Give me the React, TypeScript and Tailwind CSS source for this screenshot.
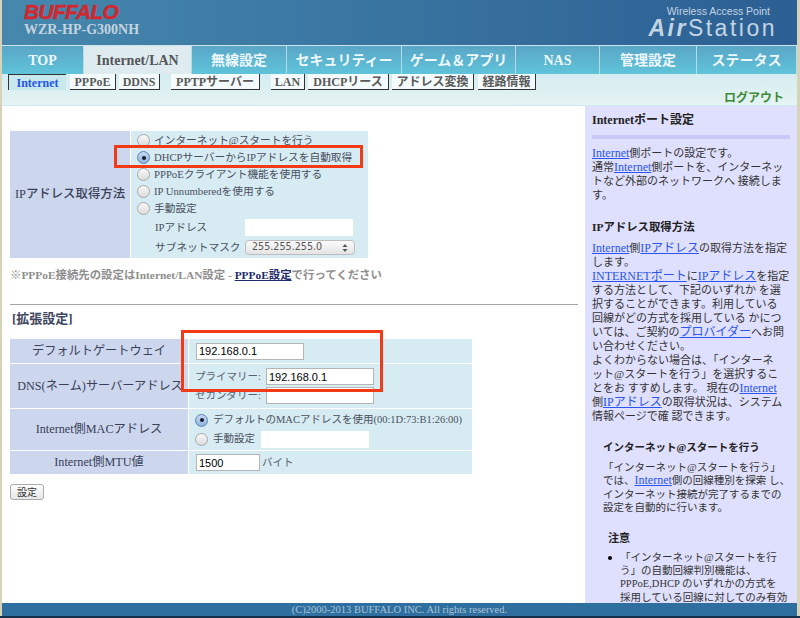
import React from "react";

const serif = "font-['Liberation_Serif','Noto_Sans_CJK_JP',serif]";

type Part = string | { a: string };
const L = ({ t }: { t: string }) => <a className="text-[12px] text-[#2a55ee] underline">{t}</a>;
const Line = ({ parts }: { parts: Part[] }) => (
  <div className="whitespace-nowrap">
    {parts.map((p, i) => (typeof p === "string" ? <span key={i}>{p}</span> : <L key={i} t={p.a} />))}
  </div>
);

const Radio = ({ on }: { on?: boolean }) => (
  <span
    className={
      on
        ? "flex h-[13px] w-[13px] shrink-0 items-center justify-center rounded-full border border-[#5f7fb5] bg-gradient-to-b from-[#c5d9f1] to-[#8fb4e0]"
        : "block h-[13px] w-[13px] shrink-0 rounded-full border border-[#a8a8a8] bg-gradient-to-b from-[#f8f8f8] to-[#dcdcdc]"
    }
  >
    {on && <span className="block h-[4px] w-[4px] rounded-full bg-[#1a1a2a]" />}
  </span>
);

const tabs = [
  { t: "TOP", w: "w-[82px]" },
  { t: "Internet/LAN", w: "w-[108px]", active: true },
  { t: "無線設定", w: "w-[95px]" },
  { t: "セキュリティー", w: "w-[115px]" },
  { t: "ゲーム＆アプリ", w: "w-[114px]" },
  { t: "NAS", w: "w-[84px]" },
  { t: "管理設定", w: "w-[97px]" },
  { t: "ステータス", w: "w-[100px]" },
];

const subs = [
  { t: "Internet", w: "w-[58px]", ml: "ml-[6px]", on: true },
  { t: "PPPoE", w: "w-[46px]", ml: "ml-[4px]" },
  { t: "DDNS", w: "w-[41px]", ml: "ml-[3px]" },
  { t: "PPTPサーバー", w: "w-[89px]", ml: "ml-[11px]" },
  { t: "LAN", w: "w-[34px]", ml: "ml-[11px]" },
  { t: "DHCPリース", w: "w-[81px]", ml: "ml-[3px]" },
  { t: "アドレス変換", w: "w-[82px]", ml: "ml-[3px]" },
  { t: "経路情報", w: "w-[58px]", ml: "ml-[4px]" },
];

const Field = ({ w, value, bare }: { w: string; value?: string; bare?: boolean }) => (
  <input
    readOnly
    defaultValue={value}
    className={`${w} h-[17px] bg-white px-[2px] font-['Liberation_Sans',sans-serif] text-[11px] text-black outline-none ${bare ? "" : "border border-[#b5b5b5]"}`}
  />
);

const RadioRow = ({ on, children }: { on?: boolean; children: React.ReactNode }) => (
  <div className="flex h-[17px] items-center gap-[4px] whitespace-nowrap pl-[6px] text-[10.7px] text-[#4a4f5e]">
    <Radio on={on} />
    <span>{children}</span>
  </div>
);

export default function App() {
  return (
    <div className={`${serif} flex h-[618px] w-[800px] flex-col overflow-hidden bg-white`}>
      <div className="flex min-h-0 flex-1 border-l-2 border-r-[3px] border-[#d6d3b8]">
        <div className="relative flex min-w-0 flex-1 flex-col">
          {/* header */}
          <header className="flex h-[45px] items-start justify-between bg-gradient-to-r from-[#4688ad] to-[#2c5f93] pl-[22px] pr-[20px]">
            <div className="pt-[1px]">
              <div className="pr-[2px] font-['Liberation_Sans',sans-serif] text-[21px] font-bold italic leading-[21px] tracking-[-0.7px] text-[#d0282e] [-webkit-text-stroke:0.5px_#d0282e]">
                BUFFALO
              </div>
              <div className="text-[14px] font-bold leading-[15px] text-[#c4d3df]">WZR-HP-G300NH</div>
            </div>
            <div className="pt-[5px] text-right font-['Liberation_Sans',sans-serif] text-[#c3d4e3]">
              <div className="pr-[7px] text-[10.5px] leading-[12px]">Wireless Access Point</div>
              <div className="mt-[1px] text-[23px] leading-[20px] tracking-[2.5px]">
                <span className="font-bold italic">Air</span>
                <span>Station</span>
              </div>
            </div>
          </header>

          {/* tabs */}
          <nav className="flex h-[29px] border-t border-[#cfe3ea] bg-gradient-to-b from-[#5aa6c6] to-[#5fc4da]">
            {tabs.map((t) => (
              <div
                key={t.t}
                className={`${t.w} flex items-center justify-center border-r border-[#b5dbe6] text-[14px] font-bold ${
                  t.active ? "bg-[#dfecef] text-[#55565a]" : "text-[#eef7fa]"
                }`}
              >
                {t.t}
              </div>
            ))}
          </nav>

          {/* sub nav */}
          <div className="relative h-[32px] border-b border-[#cfeaf0] bg-gradient-to-b from-[#d4ecf0] to-[#e5f3f3]">
            <div className="flex">
              {subs.map((s) => (
                <div
                  key={s.t}
                  className={`${s.w} ${s.ml} flex h-[16px] items-center justify-center whitespace-nowrap text-[12px] font-bold ${
                    s.on
                      ? "border-l border-t border-[#333] bg-[#c8e8ee] text-[#2255ee]"
                      : "border-b border-r border-[#333] bg-[#f3fbfc] text-[#5a5a5a]"
                  }`}
                >
                  {s.t}
                </div>
              ))}
            </div>
            <div className="absolute right-[13px] top-[17px] text-[12px] font-bold leading-[14px] text-[#3d8a35]">
              ログアウト
            </div>
          </div>

          {/* body */}
          <div className="flex min-h-0 flex-1">
            <main className="relative w-[583px] shrink-0 pl-[8px] pt-[25px]">
              <div className="flex w-[358px]">
                <div className="flex h-[127px] w-[120px] items-center justify-center whitespace-nowrap bg-[#ccd7ee] text-[12.4px] font-medium text-[#3a4058]">
                  IPアドレス取得方法
                </div>
                <div className="ml-px flex-1 bg-[#d6ebf2] pt-[1px]">
                  <RadioRow>インターネット@スタートを行う</RadioRow>
                  <RadioRow on>DHCPサーバーからIPアドレスを自動取得</RadioRow>
                  <RadioRow>PPPoEクライアント機能を使用する</RadioRow>
                  <RadioRow>IP Unnumberedを使用する</RadioRow>
                  <RadioRow>手動設定</RadioRow>
                  <div className="mt-[1px] flex h-[19px] items-center whitespace-nowrap pl-[24px] text-[10.7px] text-[#4a4f5e]">
                    <span className="w-[90px]">IPアドレス</span>
                    <Field w="w-[108px]" bare />
                  </div>
                  <div className="mt-[1px] flex h-[19px] items-center whitespace-nowrap pl-[24px] text-[10.7px] text-[#4a4f5e]">
                    <span className="w-[90px]">サブネットマスク</span>
                    <div className="flex h-[15px] w-[110px] items-center justify-between rounded-[4px] border border-[#bdbdbd] bg-gradient-to-b from-[#fbfbfb] to-[#e4e4e4] px-[6px] font-['DejaVu_Sans',sans-serif] text-[9.6px] text-[#555]">
                      <span>255.255.255.0</span>
                      <svg width="6" height="10" viewBox="0 0 6 10">
                        <path d="M0.5 4 L3 1 L5.5 4 Z M0.5 6 L3 9 L5.5 6 Z" fill="#555" />
                      </svg>
                    </div>
                  </div>
                </div>
              </div>

              <p className="mt-[10px] whitespace-nowrap text-[11.4px] font-bold leading-[14px] text-[#8e8e8e]">
                ※PPPoE接続先の設定はInternet/LAN設定 -{" "}
                <a className="text-[#1e2a6b] underline">PPPoE設定</a>で行ってください
              </p>

              <hr className="mt-[22px] w-[568px] border-t border-[#a5a5a5]" />
              <h3 className="mt-[7px] pl-[2px] text-[13px] font-bold leading-[14px] text-[#3f4660]">[拡張設定]</h3>

              <div className="mt-[13px] w-[462px] text-[12.2px] text-[#3a4058]">
                <div className="flex h-[24px]">
                  <div className="flex w-[178px] items-center justify-center bg-[#ccd7ee]">デフォルトゲートウェイ</div>
                  <div className="ml-px flex flex-1 items-center bg-[#d6ebf2] pl-[7px]">
                    <Field w="w-[108px]" value="192.168.0.1" />
                  </div>
                </div>
                <div className="mt-px flex h-[44px]">
                  <div className="flex w-[178px] items-center justify-center whitespace-nowrap bg-[#ccd7ee] pl-[2px]">
                    DNS(ネーム)サーバーアドレス
                  </div>
                  <div className="ml-px flex-1 bg-[#d6ebf2] pl-[6px] pt-[4px] text-[10.5px] text-[#5a6070]">
                    <div className="flex h-[17px] items-center">
                      <span className="w-[71px]">プライマリー:</span>
                      <Field w="w-[108px]" value="192.168.0.1" />
                    </div>
                    <div className="mt-[2px] flex h-[17px] items-center">
                      <span className="w-[71px]">セカンダリー:</span>
                      <Field w="w-[108px]" />
                    </div>
                  </div>
                </div>
                <div className="mt-px flex h-[41px]">
                  <div className="flex w-[178px] items-center justify-center bg-[#ccd7ee]">Internet側MACアドレス</div>
                  <div className="ml-px flex-1 bg-[#d6ebf2] pl-[6px] pt-[2px] text-[10.5px] text-[#4a4f5e]">
                    <div className="flex h-[18px] items-center gap-[5px] whitespace-nowrap">
                      <Radio on />
                      <span>デフォルトのMACアドレスを使用(00:1D:73:B1:26:00)</span>
                    </div>
                    <div className="mt-[1px] flex h-[18px] items-center gap-[5px]">
                      <Radio />
                      <span className="w-[43px]">手動設定</span>
                      <Field w="w-[108px]" bare />
                    </div>
                  </div>
                </div>
                <div className="mt-px flex h-[23px]">
                  <div className="flex w-[178px] items-center justify-center bg-[#ccd7ee]">Internet側MTU値</div>
                  <div className="ml-px flex flex-1 items-center gap-[2px] bg-[#d6ebf2] pl-[7px] text-[10.5px] text-[#5a6070]">
                    <Field w="w-[64px]" value="1500" />
                    <span>バイト</span>
                  </div>
                </div>
              </div>

              <button className="mt-[10px] flex h-[16px] w-[34px] items-center justify-center rounded-[3px] border border-[#aaa] bg-gradient-to-b from-[#fff] to-[#e6e6e6] text-[10px] text-[#333]">
                設定
              </button>

              {/* annotations */}
              <div className="absolute left-[112px] top-[39px] h-[23px] w-[249px] border-[3px] border-[#f23b16]" />
              <div className="absolute left-[179px] top-[224px] h-[62px] w-[202px] border-[3px] border-[#f23b16]" />
            </main>

            <aside className="min-w-0 flex-1 overflow-hidden bg-[#dfe0fd] pl-[7px] pr-[5px] pt-[7px] text-[11px] leading-[14px] text-[#333]">
              <h4 className="text-[12px] font-bold text-[#222]">Internetポート設定</h4>
              <div className="mt-[8px] h-[4px] w-[198px] bg-[#c8c9f8]" />
              <div className="mt-[7px]">
                <Line parts={[{ a: "Internet" }, "側ポートの設定です。"]} />
                <Line parts={["通常", { a: "Internet" }, "側ポートを、インターネッ"]} />
                <Line parts={["トなど外部のネットワークへ 接続しま"]} />
                <Line parts={["す。"]} />
              </div>
              <h4 className="mt-[18px] text-[11.4px] font-bold text-[#222]">IPアドレス取得方法</h4>
              <div className="mt-[7px]">
                <Line parts={[{ a: "Internet" }, "側", { a: "IPアドレス" }, "の取得方法を指定"]} />
                <Line parts={["します。"]} />
                <Line parts={[{ a: "INTERNETポート" }, "に", { a: "IPアドレス" }, "を指定"]} />
                <Line parts={["する方法として、下記のいずれか を選"]} />
                <Line parts={["択することができます。利用している"]} />
                <Line parts={["回線がどの方式を採用している かにつ"]} />
                <Line parts={["いては、ご契約の", { a: "プロバイダー" }, "へお問"]} />
                <Line parts={["い合わせください。"]} />
                <Line parts={["よくわからない場合は、「インターネ"]} />
                <Line parts={["ット@スタートを行う」を選択するこ"]} />
                <Line parts={["とをお すすめします。 現在の", { a: "Internet" }]} />
                <Line parts={["側", { a: "IPアドレス" }, "の取得状況は、システム"]} />
                <Line parts={["情報ページで確 認できます。"]} />
              </div>
              <div className="ml-[11px]">
                <h4 className="mt-[18px] text-[10.5px] font-bold text-[#222]">インターネット@スタートを行う</h4>
                <div className="mt-[6px] text-[10.5px] leading-[13.4px]">
                  <Line parts={["「インターネット@スタートを行う」"]} />
                  <Line parts={["では、", { a: "Internet" }, "側の回線種別を探索 し、"]} />
                  <Line parts={["インターネット接続が完了するまでの"]} />
                  <Line parts={["設定を自動的に行います。"]} />
                </div>
              </div>
              <div className="ml-[16px]">
                <h4 className="mt-[16px] text-[11px] font-bold text-[#222]">注意</h4>
                <div className="relative mt-[6px] pl-[12px] text-[10.5px] leading-[13.4px]">
                  <span className="absolute left-0 top-[5px] h-[4px] w-[4px] rounded-full bg-black" />
                  <Line parts={["「インターネット@スタートを行"]} />
                  <Line parts={["う」の自動回線判別機能は、"]} />
                  <Line parts={["PPPoE,DHCP のいずれかの方式を"]} />
                  <Line parts={["採用している回線に対してのみ有効"]} />
                </div>
              </div>
            </aside>
          </div>

          {/* footer */}
          <footer className="flex h-[13px] shrink-0 items-center justify-center bg-[#2f6f9f] text-[10.5px] text-[#a9c3d6]">
            (C)2000-2013 BUFFALO INC. All rights reserved.
          </footer>
        </div>
      </div>
      <div className="h-[2px] shrink-0 bg-[#14304a]" />
    </div>
  );
}
